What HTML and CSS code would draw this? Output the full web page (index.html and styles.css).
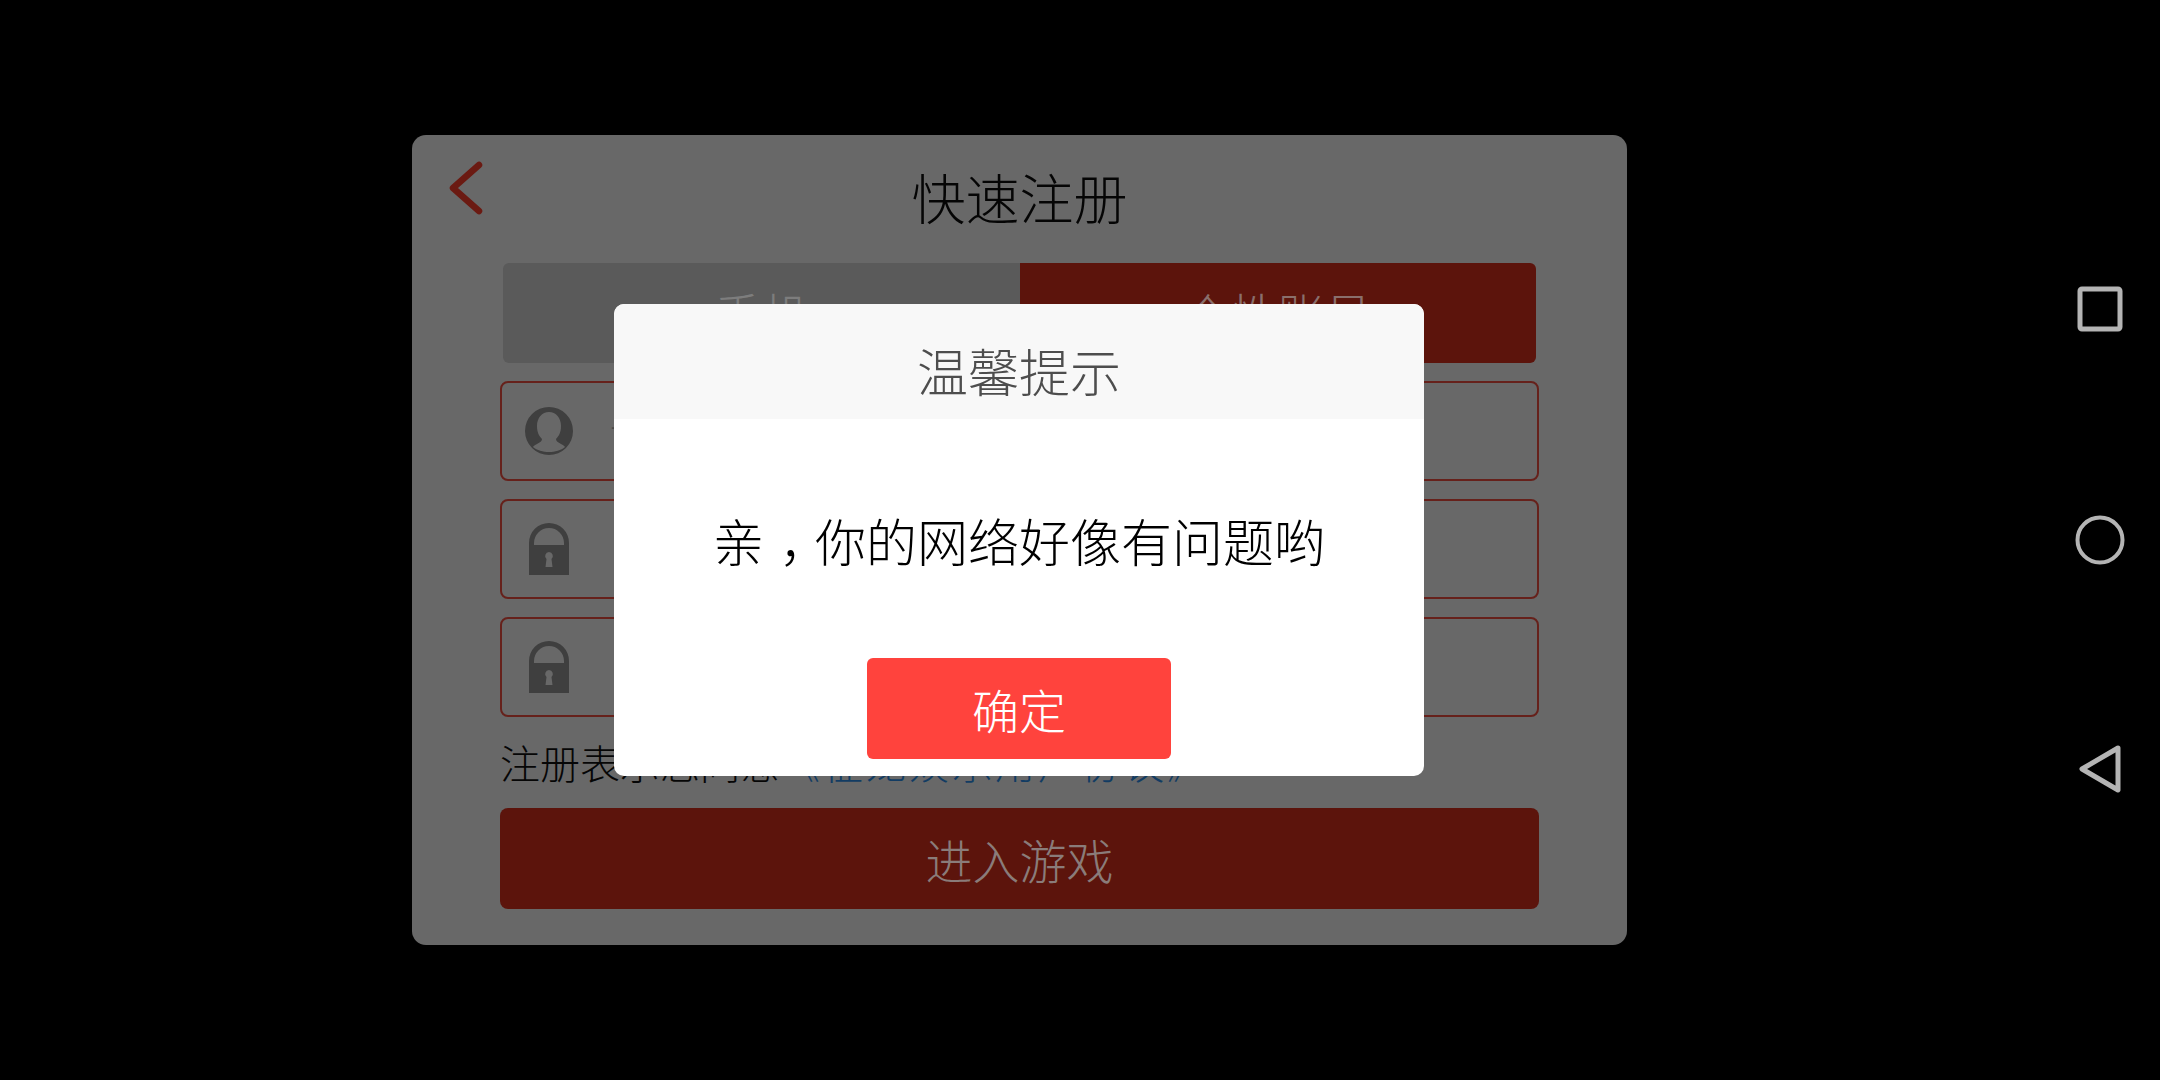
FILE: index.html
```html
<!DOCTYPE html>
<html lang="zh-CN">
<head>
    <meta charset="UTF-8">
    <title>快速注册</title>
    <link rel="stylesheet" href="styles.css">
</head>
<body>
    <div class="screen">
        <div class="main">
            <div class="panel">
                <div class="panel-head">
                    <svg class="back" width="40" height="58" viewBox="0 0 40 58">
                        <path d="M33 6 L7 29 L33 52" fill="none" stroke="#6b1a12" stroke-width="6.500" stroke-linecap="round" stroke-linejoin="round"/>
                    </svg>
                    <h1 class="panel-title">快速注册</h1>
                </div>
                <div class="panel-body">
                    <div class="tabs">
                        <div class="tab">手机</div>
                        <div class="tab tab-active">个性账号</div>
                    </div>
                    <div class="field">
                        <svg class="field-icon" width="50" height="50" viewBox="0 0 50 50">
                            <path fill-rule="evenodd" fill="#3f3f3f" d="M25 1a24 24 0 1 0 0 48a24 24 0 1 0 0-48z M25 6c7 0 12 6 12 14c0 6-2 10-5 13c0 2 2 3.500 5 5c2 1 3.500 2 4 3c-4 3.500-10 5-16 5s-12-1.500-16-5c.5-1 2-2 4-3c3-1.500 5-3 5-5c-3-3-5-7-5-13c0-8 5-14 12-14z"/>
                        </svg>
                        <span class="field-text">请输入账号</span>
                    </div>
                    <div class="field">
                        <svg class="field-icon" width="50" height="52" viewBox="0 0 50 52">
                            <path fill-rule="evenodd" fill="#3f3f3f" d="M5 22v-2a20 20 0 0 1 40 0v2h-5v-2a15 15 0 0 0-30 0v2z M5 22h40v30h-40z M25 29a4 4 0 0 0-2.500 7l-1 8h7l-1-8a4 4 0 0 0-2.500-7z"/>
                        </svg>
                    </div>
                    <div class="field">
                        <svg class="field-icon" width="50" height="52" viewBox="0 0 50 52">
                            <path fill-rule="evenodd" fill="#3f3f3f" d="M5 22v-2a20 20 0 0 1 40 0v2h-5v-2a15 15 0 0 0-30 0v2z M5 22h40v30h-40z M25 29a4 4 0 0 0-2.500 7l-1 8h7l-1-8a4 4 0 0 0-2.500-7z"/>
                        </svg>
                    </div>
                    <p class="agree">注册表示您同意<span class="agree-link">《征龙娱乐用户协议》</span></p>
                    <div class="enter-btn">进入游戏</div>
                </div>
            </div>

            <div class="dialog">
                <div class="dialog-title">温馨提示</div>
                <div class="dialog-msg">亲<span class="comma">，</span>你的网络好像有问题哟</div>
                <div class="dialog-foot">
                    <div class="ok-btn">确定</div>
                </div>
            </div>
        </div>

        <div class="nav">
            <svg width="50" height="54" viewBox="0 -2 50 54">
                <rect x="5" y="5" width="40" height="40" rx="2" fill="none" stroke="#b4b4b4" stroke-width="5"/>
            </svg>
            <svg width="54" height="54" viewBox="0 0 54 54">
                <circle cx="27" cy="27" r="22.500" fill="none" stroke="#b4b4b4" stroke-width="4"/>
            </svg>
            <svg width="50" height="50" viewBox="0 0 50 50">
                <path d="M43 4 L7 25 L43 46 Z" fill="none" stroke="#b4b4b4" stroke-width="5" stroke-linejoin="round"/>
            </svg>
        </div>
    </div>
</body>
</html>
```

FILE: styles.css
```css
* {
    margin: 0;
    padding: 0;
    box-sizing: border-box;
}

body {
    width: 2160px;
    height: 1080px;
    background: #000;
    font-family: 'Noto Sans CJK SC', 'Noto Sans', sans-serif;
    font-weight: 300;
    text-spacing-trim: space-all;
    overflow: hidden;
}

.screen {
    display: flex;
    height: 1080px;
}

.main {
    position: relative;
    flex: 1;
    display: flex;
    align-items: center;
    justify-content: center;
}

.panel {
    width: 1215px;
    height: 810px;
    background: #686868;
    border-radius: 14px;
}

.panel-head {
    position: relative;
    height: 128px;
    text-align: center;
}

.back {
    position: absolute;
    left: 34px;
    top: 24px;
    filter: blur(0.6px);
}

.panel-title {
    padding-top: 26px;
    font-size: 54px;
    line-height: 72px;
    font-weight: 300;
    color: #050505;
}

.panel-body {
    display: flex;
    flex-direction: column;
    padding: 0 88px;
}

.tabs {
    display: flex;
    height: 100px;
    margin: 0 3px 18px;
    border-radius: 6px;
    overflow: hidden;
}

.tab {
    flex: 1;
    background: #5a5a5a;
    color: #7d7d7d;
    font-size: 47px;
    line-height: 100px;
    text-align: center;
}

.tab-active {
    background: #5c140c;
    color: #8a6f6c;
}

.field {
    display: flex;
    align-items: center;
    height: 100px;
    margin-bottom: 18px;
    padding-left: 22px;
    border: 2px solid #66211b;
    border-radius: 8px;
}

.field-icon {
    flex: none;
    filter: blur(0.7px);
}

.field-text {
    margin-left: 36px;
    font-size: 40px;
    color: #4a4a4a;
}

.agree {
    margin-top: -1px;
    font-size: 40px;
    line-height: 56px;
    color: #060606;
}

.agree-link {
    color: #123c63;
    letter-spacing: 3px;
}

.enter-btn {
    height: 101px;
    margin-top: 18px;
    background: #5c140c;
    border-radius: 8px;
    color: #8a7c7a;
    font-size: 47px;
    line-height: 101px;
    text-align: center;
}

.dialog {
    position: absolute;
    left: 614px;
    top: 304px;
    width: 810px;
    height: 472px;
    background: #fff;
    border-radius: 10px;
    overflow: hidden;
}

.dialog-title {
    height: 115px;
    padding-top: 8px;
    background: #f8f8f8;
    color: #4d4d4d;
    font-size: 51px;
    line-height: 116px;
    text-align: center;
}

.dialog-msg {
    padding-top: 85px;
    color: #000;
    font-size: 51px;
    line-height: 72px;
    text-align: center;
}

.comma {
    display: inline-block;
    padding-left: 0.3em;
    margin-right: -0.3em;
}

.dialog-foot {
    display: flex;
    justify-content: center;
    padding-top: 82px;
}

.ok-btn {
    width: 304px;
    height: 101px;
    background: #ff433d;
    border-radius: 6px;
    color: #fff;
    font-size: 47px;
    line-height: 101px;
    text-align: center;
}

.nav {
    flex: none;
    width: 121px;
    display: flex;
    flex-direction: column;
    align-items: center;
    justify-content: center;
    gap: 177px;
    padding-bottom: 4px;
}
```
